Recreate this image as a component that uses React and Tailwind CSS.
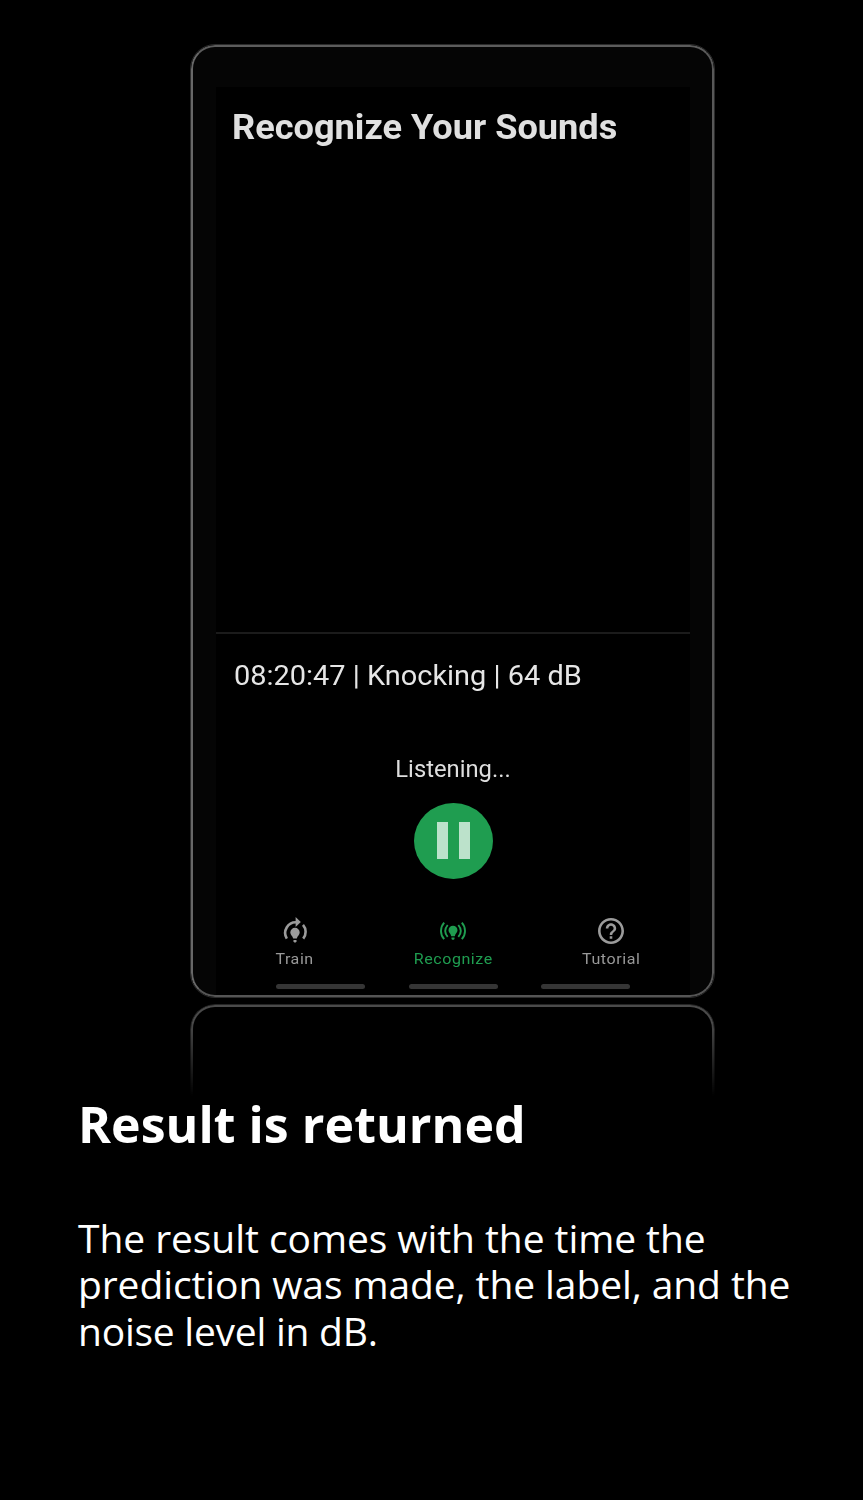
import React from "react";

function TrainIcon() {
  return (
    <svg viewBox="0 0 26 28" className="h-[28px] w-[26px]" fill="none">
      <path d="M4.800 21.600A10.700 10.700 0 0 1 14.500 5.300" stroke="#9b9b9b" strokeWidth="2.6" />
      <path d="M13.600 0v10l5.200-5z" fill="#9b9b9b" />
      <path d="M21 7.800A10.700 10.700 0 0 1 21.200 21.600" stroke="#9b9b9b" strokeWidth="2.6" />
      <path d="M13 10.800a4.700 4.700 0 0 0-4.700 4.700c0 2.500 2.300 3.300 2.900 6h3.600c.6-2.700 2.900-3.500 2.900-6A4.700 4.700 0 0 0 13 10.800z" fill="#9b9b9b" />
      <path d="M11.500 23h3v1.500l-.8 1h-1.400l-.8-1z" fill="#9b9b9b" />
    </svg>
  );
}

function RecognizeIcon() {
  return (
    <svg viewBox="0 0 28 28" className="h-[28px] w-[28px]" fill="none" stroke="#1f9d50" strokeWidth="1.9">
      <path d="M5.200 5.700C.9 10.500.9 17.400 5.200 22.200M22.800 5.700c4.300 4.800 4.300 11.700 0 16.500" />
      <path d="M8.700 8C5.600 11.700 5.600 16.200 8.700 19.900M19.300 8c3.100 3.700 3.100 8.200 0 11.900" />
      <path d="M14 8.800a4.500 4.500 0 0 0-4.500 4.500c0 2.400 2.100 3 2.700 5.900h3.600c.6-2.900 2.700-3.500 2.700-5.900A4.500 4.500 0 0 0 14 8.800z" fill="#1f9d50" stroke="none" />
      <path d="M12.500 20.500h3v1.400l-.7.9h-1.600l-.7-.9z" fill="#1f9d50" stroke="none" />
    </svg>
  );
}

function HelpIcon() {
  return (
    <svg viewBox="2 2 20 20" className="my-[1px] h-[26px] w-[26px]" fill="#9b9b9b">
      <path d="M11 18h2v-2h-2v2zm1-16C6.480 2 2 6.480 2 12s4.480 10 10 10 10-4.480 10-10S17.520 2 12 2zm0 18c-4.410 0-8-3.590-8-8s3.590-8 8-8 8 3.590 8 8-3.590 8-8 8zm0-14c-2.210 0-4 1.790-4 4h2c0-1.100.9-2 2-2s2 .9 2 2c0 2-3 1.750-3 5h2c0-2.250 3-2.500 3-5 0-2.210-1.790-4-4-4z" />
    </svg>
  );
}

function Tab({ icon, label, className }) {
  return (
    <div className="flex flex-1 flex-col items-center">
      {icon}
      <span className={`mt-[4px] scale-x-[1.033] whitespace-nowrap text-[15.5px] leading-[20px] tracking-[0.55px] ${className}`}>{label}</span>
    </div>
  );
}

function Phone() {
  return (
    <div className="ml-[190px] h-[954px] w-[525px] overflow-hidden rounded-[25px] border border-[#2b2b2b]">
      <div className="h-full overflow-hidden rounded-[24px] border-2 border-t-[#5c5c5c] border-r-[#585858] border-b-[#555] border-l-[#686868] bg-[#050505] pl-[23px] pt-[40px] font-['Roboto',sans-serif]">
        <div className="flex h-[908px] w-[474px] flex-col bg-black">
          <h1 className="ml-[16px] h-[545px] origin-left scale-x-[1.033] self-start whitespace-nowrap pt-[20px] text-[35px] font-bold leading-[42px] text-[#e0e0e0]">Recognize Your Sounds</h1>
          <div className="border-t-2 border-[#1b1b1b] pl-[18px] pt-[25px]">
            <p className="origin-left scale-x-[1.033] whitespace-nowrap text-[28px] leading-[34px] text-[#e6e6e6]">08:20:47 | Knocking | 64 dB</p>
          </div>
          <p className="mt-[63px] scale-x-[1.033] whitespace-nowrap text-center text-[23px] leading-[28px] text-[#dedede]">Listening...</p>
          <button aria-label="Pause" className="mt-[18.600px] flex h-[76.400px] w-[79px] items-center justify-center gap-[11px] self-center rounded-[50%] bg-[#1f9d50]">
            <span className="h-[37px] w-[11px] bg-[#bce2cb]" />
            <span className="h-[37px] w-[11px] bg-[#bce2cb]" />
          </button>
          <nav className="mt-[38px] flex">
            <Tab icon={<TrainIcon />} label="Train" className="text-[#999]" />
            <Tab icon={<RecognizeIcon />} label="Recognize" className="text-[#1f9d50]" />
            <Tab icon={<HelpIcon />} label="Tutorial" className="text-[#999]" />
          </nav>
          <div className="mt-[15px] flex justify-between px-[60px]">
            <span className="h-[5px] w-[89px] rounded-full bg-[#353535]" />
            <span className="h-[5px] w-[89px] rounded-full bg-[#353535]" />
            <span className="h-[5px] w-[89px] rounded-full bg-[#353535]" />
          </div>
        </div>
      </div>
    </div>
  );
}

export default function App() {
  return (
    <main className="h-[1500px] w-[863px] overflow-hidden bg-black pt-[44px]">
      <Phone />
      <div className="ml-[190px] mt-[6px] h-[92px] w-[525px] rounded-t-[25px] border-x border-t border-[#252525] [mask-image:linear-gradient(to_bottom,black,black_20%,transparent)]">
        <div className="h-full rounded-t-[24px] border-x-2 border-t-2 border-[#4a4a4a]" />
      </div>
      <section className="px-[78px] font-['Open_Sans',sans-serif] text-white">
        <h2 className="whitespace-nowrap text-[50px] font-bold leading-[56px] tracking-[0.05px]">Result is returned</h2>
        <p className="mt-[63px] flex flex-col whitespace-nowrap text-[39px] leading-[46.300px]">
          <span className="tracking-[-0.07px]">The result comes with the time the</span>
          <span className="tracking-[-0.1px]">prediction was made, the label, and the</span>
          <span className="tracking-[-0.25px]">noise level in dB.</span>
        </p>
      </section>
    </main>
  );
}
